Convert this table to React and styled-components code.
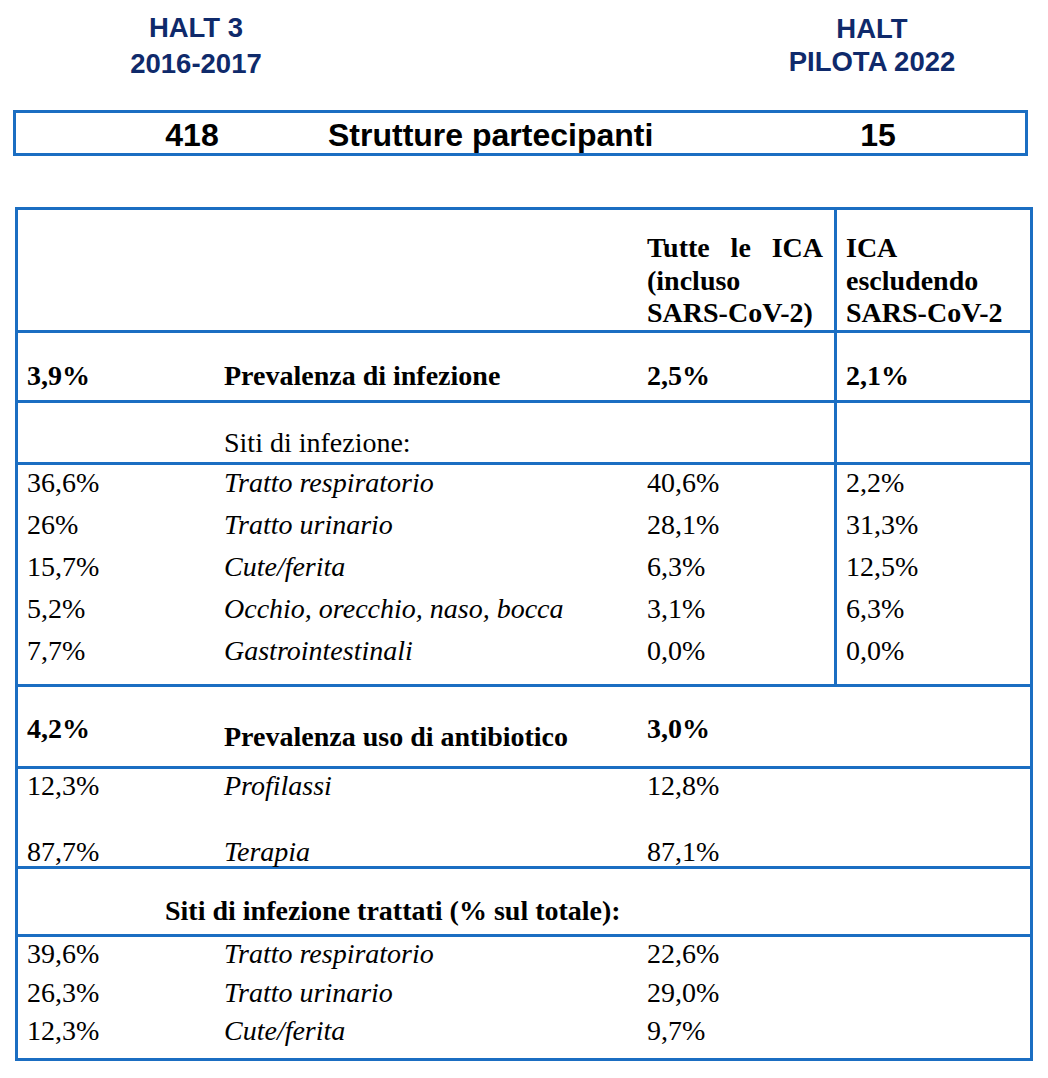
import styled, { createGlobalStyle } from 'styled-components';

const BLUE = '#1b6ec2';
const NAVY = '#0f2a6b';

const sites = [
  ['36,6%', 'Tratto respiratorio', '40,6%', '2,2%'],
  ['26%', 'Tratto urinario', '28,1%', '31,3%'],
  ['15,7%', 'Cute/ferita', '6,3%', '12,5%'],
  ['5,2%', 'Occhio, orecchio, naso, bocca', '3,1%', '6,3%'],
  ['7,7%', 'Gastrointestinali', '0,0%', '0,0%'],
];

const treated = [
  ['39,6%', 'Tratto respiratorio', '22,6%'],
  ['26,3%', 'Tratto urinario', '29,0%'],
  ['12,3%', 'Cute/ferita', '9,7%'],
];

function App() {
  return (
    <Page>
      <GlobalStyle />
      <Header>
        <Title $lh={36}>
          HALT 3
          <br />
          2016-2017
        </Title>
        <span />
        <Title $lh={33} $offset={2}>
          HALT
          <br />
          PILOTA 2022
        </Title>
      </Header>

      <CountBox>
        <CountValue>418</CountValue>
        <CountLabel>Strutture partecipanti</CountLabel>
        <CountValue>15</CountValue>
      </CountBox>

      <DataTable>
        <colgroup>
          <col style={{ width: 197 }} />
          <col style={{ width: 423 }} />
          <col style={{ width: 196 }} />
          <col style={{ width: 196 }} />
        </colgroup>
        <tbody>
          <tr>
            <Cell $valign="bottom" $pt={22} $pb={0} $lh={32.5} />
            <Cell $valign="bottom" $pt={22} $pb={0} $lh={32.5} />
            <Cell $valign="bottom" $pt={22} $pb={0} $lh={32.5} $bold $justify>
              Tutte le ICA (incluso SARS-CoV-2)
            </Cell>
            <Cell $valign="bottom" $pt={22} $pb={0} $lh={32.5} $bold $divider>
              ICA escludendo SARS-CoV-2
            </Cell>
          </tr>

          <tr>
            <Cell $rule $pt={27} $pb={8} $bold>3,9%</Cell>
            <Cell $rule $pt={27} $pb={8} $bold>Prevalenza di infezione</Cell>
            <Cell $rule $pt={27} $pb={8} $bold>2,5%</Cell>
            <Cell $rule $pt={27} $pb={8} $bold $divider>2,1%</Cell>
          </tr>

          <tr>
            <Cell $rule $pt={24} $pb={3} />
            <Cell $rule $pt={24} $pb={3}>Siti di infezione:</Cell>
            <Cell $rule $pt={24} $pb={3} />
            <Cell $rule $pt={24} $pb={3} $divider />
          </tr>

          {sites.map((row, i) => {
            const first = i === 0;
            const pb = i === sites.length - 1 ? 17 : 8;
            return (
              <tr key={row[1]}>
                <Cell $rule={first} $pt={2} $pb={pb}>{row[0]}</Cell>
                <Cell $rule={first} $pt={2} $pb={pb} $italic>{row[1]}</Cell>
                <Cell $rule={first} $pt={2} $pb={pb}>{row[2]}</Cell>
                <Cell $rule={first} $pt={2} $pb={pb} $divider>{row[3]}</Cell>
              </tr>
            );
          })}

          <tr>
            <Cell $rule $pt={26} $pb={0} $bold>4,2%</Cell>
            <Cell $rule $pt={34} $pb={13} $bold>Prevalenza uso di antibiotico</Cell>
            <Cell $rule $pt={26} $pb={0} $bold>3,0%</Cell>
            <Cell $rule $pt={26} $pb={0} />
          </tr>

          <tr>
            <Cell $rule $pt={1} $pb={0}>12,3%</Cell>
            <Cell $rule $pt={1} $pb={0} $italic>Profilassi</Cell>
            <Cell $rule $pt={1} $pb={0}>12,8%</Cell>
            <Cell $rule $pt={1} $pb={0} />
          </tr>
          <tr>
            <Cell $pt={36} $pb={0} $lh={28}>87,7%</Cell>
            <Cell $pt={36} $pb={0} $lh={28} $italic>Terapia</Cell>
            <Cell $pt={36} $pb={0} $lh={28}>87,1%</Cell>
            <Cell $pt={36} $pb={0} $lh={28} />
          </tr>

          <tr>
            <Cell colSpan={4} $rule $pt={26} $pb={7} $pl={147} $bold>
              Siti di infezione trattati (% sul totale):
            </Cell>
          </tr>

          {treated.map((row, i) => {
            const first = i === 0;
            const last = i === treated.length - 1;
            const pt = last ? 0 : 1;
            const pb = last ? 11 : 6;
            return (
              <tr key={row[1]}>
                <Cell $rule={first} $pt={pt} $pb={pb}>{row[0]}</Cell>
                <Cell $rule={first} $pt={pt} $pb={pb} $italic>{row[1]}</Cell>
                <Cell $rule={first} $pt={pt} $pb={pb}>{row[2]}</Cell>
                <Cell $rule={first} $pt={pt} $pb={pb} />
              </tr>
            );
          })}
        </tbody>
      </DataTable>
    </Page>
  );
}

const GlobalStyle = createGlobalStyle`
  body {
    margin: 0;
    background: #ffffff;
  }
`;

const Page = styled.div`
  width: 1048px;
  padding-top: 10px;
`;

const Header = styled.header`
  display: grid;
  grid-template-columns: 300px 1fr 300px;
  padding: 0 26px 0 46px;
`;

const Title = styled.h2`
  margin: 0;
  padding-top: ${({ $offset }) => $offset || 0}px;
  font-family: 'Liberation Sans', Arial, sans-serif;
  font-weight: 700;
  font-size: 27.5px;
  line-height: ${({ $lh }) => $lh}px;
  color: ${NAVY};
  text-align: center;
`;

const CountBox = styled.div`
  display: grid;
  grid-template-columns: 100px 414px 100px;
  column-gap: 86px;
  width: 1015px;
  box-sizing: border-box;
  margin: 28px 0 0 13px;
  padding: 5px 0 0 126px;
  height: 46px;
  border: 3px solid ${BLUE};
  font-family: 'Liberation Sans', Arial, sans-serif;
  font-weight: 700;
  font-size: 32px;
  line-height: 35px;
  color: #000;
`;

const CountValue = styled.span`
  text-align: center;
`;

const CountLabel = styled.span`
  white-space: nowrap;
`;

const DataTable = styled.table`
  width: 1018px;
  margin: 51px 0 0 15px;
  table-layout: fixed;
  border-collapse: separate;
  border-spacing: 0;
  border: 3px solid ${BLUE};
  font-family: 'Liberation Serif', 'Times New Roman', serif;
  font-size: 28px;
  color: #000;
`;

const Cell = styled.td`
  box-sizing: border-box;
  vertical-align: ${({ $valign }) => $valign || 'top'};
  padding: ${({ $pt }) => $pt}px 11px ${({ $pb }) => $pb}px
    ${({ $pl }) => $pl || 9}px;
  line-height: ${({ $lh }) => $lh || 32}px;
  font-weight: ${({ $bold }) => ($bold ? 700 : 400)};
  font-style: ${({ $italic }) => ($italic ? 'italic' : 'normal')};
  text-align: ${({ $justify }) => ($justify ? 'justify' : 'left')};
  white-space: ${({ $justify, $bold, $valign }) =>
    $justify || $valign ? 'normal' : 'nowrap'};
  border-top: ${({ $rule }) => ($rule ? `3px solid ${BLUE}` : 'none')};
  border-left: ${({ $divider }) => ($divider ? `3px solid ${BLUE}` : 'none')};
`;

export default App;
